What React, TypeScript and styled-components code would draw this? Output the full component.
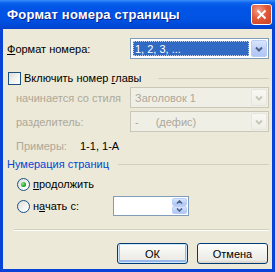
import React from 'react';
import styled, { createGlobalStyle } from 'styled-components';

const GlobalStyle = createGlobalStyle`
  html, body {
    margin: 0;
    padding: 0;
    background: #ece9d8;
  }
  body {
    font-family: "Liberation Sans", Arial, sans-serif;
    font-size: 11px;
    color: #000;
  }
`;

const Window = styled.div`
  width: 275px;
  height: 272px;
  box-sizing: border-box;
  background: #0842d6;
  display: flex;
  flex-direction: column;
`;

const TitleBar = styled.div`
  height: 29px;
  flex: none;
  display: flex;
  align-items: center;
  justify-content: space-between;
  padding: 0 3px 0 7px;
  background: linear-gradient(
    to bottom,
    #3b8cf8 0px,
    #0a62ec 3px,
    #0054e6 8px,
    #0052e2 20px,
    #0046d4 27px,
    #0a3ec4 29px
  );
`;

const Title = styled.span`
  color: #fff;
  font-weight: bold;
  font-size: 13px;
  text-shadow: 1px 1px 0 #0a1e8c;
  letter-spacing: 0.2px;
`;

const CloseButton = styled.div`
  width: 21px;
  height: 21px;
  box-sizing: border-box;
  border: 1px solid #fff;
  border-radius: 3px;
  background: radial-gradient(circle at 35% 30%, #f0a08a 0%, #e2593a 45%, #c8401e 100%);
  display: flex;
  align-items: center;
  justify-content: center;
`;

const Body = styled.div`
  flex: 1;
  margin: 0 3px 3px 3px;
  background: #ece9d8;
  padding: 9px 3px 0 4px;
  display: flex;
  flex-direction: column;
`;

const FieldRow = styled.div<{ $top?: number; $h?: number; $indent?: number }>`
  display: flex;
  align-items: center;
  height: ${p => p.$h ?? 21}px;
  margin-top: ${p => p.$top ?? 0}px;
  padding-left: ${p => p.$indent ?? 0}px;
  flex: none;
`;

const Label = styled.span<{ $disabled?: boolean; $width?: number }>`
  color: ${p => (p.$disabled ? '#aca899' : '#000')};
  width: ${p => (p.$width ? `${p.$width}px` : 'auto')};
  flex: none;
  white-space: pre;
`;

const U = styled.span`
  text-decoration: underline;
  text-underline-offset: 1px;
`;

const GroupLabel = styled.span`
  color: #0046d5;
  flex: none;
`;

const Rule = styled.div<{ $gap?: number }>`
  flex: 1;
  height: 1px;
  background: #d0d0bf;
  margin-left: ${p => p.$gap ?? 8}px;
  align-self: center;
`;

const Combo = styled.div<{ $disabled?: boolean }>`
  margin-left: auto;
  width: 139px;
  height: 21px;
  box-sizing: border-box;
  border: 1px solid ${p => (p.$disabled ? '#c9c7ba' : '#7f9db9')};
  background: ${p => (p.$disabled ? '#f0efe6' : '#fff')};
  display: flex;
  align-items: stretch;
  padding: 1px;
`;

const ComboText = styled.div<{ $selected?: boolean; $disabled?: boolean }>`
  flex: 1;
  display: flex;
  align-items: center;
  gap: 17px;
  padding-left: 2px;
  color: ${p => (p.$disabled ? '#aca899' : p.$selected ? '#fff' : '#000')};
  background: ${p => (p.$selected ? '#316ac5' : 'transparent')};
  outline: ${p => (p.$selected ? '1px dotted #c0d0f0' : 'none')};
  outline-offset: -1px;
  margin: 1px 2px 1px 1px;
`;

const ArrowButton = styled.div<{ $disabled?: boolean }>`
  width: 16px;
  flex: none;
  box-sizing: border-box;
  border-radius: 2px;
  border: 1px solid ${p => (p.$disabled ? '#e8e6dc' : '#b9cdf6')};
  background: ${p =>
    p.$disabled
      ? 'linear-gradient(to bottom, #f8f7f2, #efeee6)'
      : 'linear-gradient(to bottom, #d9e5fd, #bccff8 60%, #b0c6f6)'};
  display: flex;
  align-items: center;
  justify-content: center;
`;

const Box = styled.div<{ $round?: boolean }>`
  width: 13px;
  height: 13px;
  box-sizing: border-box;
  flex: none;
  border: 1px solid #1c5180;
  border-radius: ${p => (p.$round ? '50%' : '0')};
  background: linear-gradient(135deg, #dcdcd7 0%, #f5f5f2 60%, #fff 100%);
  display: flex;
  align-items: center;
  justify-content: center;
  margin-right: 3px;
`;

const Dot = styled.div`
  width: 5px;
  height: 5px;
  border-radius: 50%;
  background: radial-gradient(circle at 35% 35%, #8ee88e 0%, #21a121 60%, #1a8a1a 100%);
`;

const Spinner = styled.div`
  margin-left: auto;
  margin-right: 80px;
  width: 76px;
  height: 20px;
  box-sizing: border-box;
  border: 1px solid #7f9db9;
  background: #fff;
  display: flex;
  justify-content: flex-end;
  padding: 1px;
`;

const SpinButtons = styled.div`
  width: 15px;
  display: flex;
  flex-direction: column;
`;

const SpinButton = styled.div`
  flex: 1;
  box-sizing: border-box;
  border: 1px solid #b9cdf6;
  border-radius: 2px;
  background: linear-gradient(to bottom, #d9e5fd, #bccff8 60%, #b0c6f6);
  display: flex;
  align-items: center;
  justify-content: center;
`;

const Separator = styled.div`
  margin-top: 13px;
  margin-left: 7px;
  height: 1px;
  background: #d0d0bf;
  border-bottom: 1px solid #fff;
  flex: none;
`;

const ButtonRow = styled.div`
  margin-top: 12px;
  display: flex;
  justify-content: flex-end;
  gap: 9px;
  padding-right: 1px;
`;

const Button = styled.div<{ $default?: boolean }>`
  width: 71px;
  height: 21px;
  box-sizing: border-box;
  border: 1px solid #003c74;
  border-radius: 3px;
  background: linear-gradient(to bottom, #ffffff 0%, #f4f4f0 40%, #ecebe6 85%, #d6d0c5 100%);
  box-shadow: ${p => (p.$default ? 'inset 0 0 0 1px #cee7ff, inset 0 -1px 0 2px #98b8ea' : 'none')};
  display: flex;
  align-items: center;
  justify-content: center;
`;

const Chevron = ({ color }: { color: string }) => (
  <svg width="8" height="6" viewBox="0 0 8 6">
    <path d="M1 1.5 L4 4.5 L7 1.5" fill="none" stroke={color} strokeWidth="2" />
  </svg>
);

const SpinChevron = ({ up }: { up?: boolean }) => (
  <svg width="7" height="4" viewBox="0 0 7 4">
    <path d={up ? 'M1 3.5 L3.5 1 L6 3.5' : 'M1 0.5 L3.5 3 L6 0.5'} fill="none" stroke="#4d6185" strokeWidth="1.6" />
  </svg>
);

export default function App() {
  return (
    <>
      <GlobalStyle />
      <Window>
        <TitleBar>
          <Title>Формат номера страницы</Title>
          <CloseButton>
            <svg width="11" height="11" viewBox="0 0 11 11">
              <path d="M1.5 1.5 L9.5 9.5 M9.5 1.5 L1.5 9.5" stroke="#fff" strokeWidth="2" />
            </svg>
          </CloseButton>
        </TitleBar>
        <Body>
          <FieldRow>
            <Label>
              <U>Ф</U>ормат номера:
            </Label>
            <Combo>
              <ComboText $selected>1, 2, 3, ...</ComboText>
              <ArrowButton>
                <Chevron color="#4d6185" />
              </ArrowButton>
            </Combo>
          </FieldRow>

          <FieldRow $top={11} $h={16} $indent={1}>
            <Box />
            <Label>
              Включить номер <U>г</U>лавы
            </Label>
            <Rule $gap={16} />
          </FieldRow>

          <FieldRow $top={1} $indent={9}>
            <Label $disabled>начинается со стиля</Label>
            <Combo $disabled>
              <ComboText $disabled>Заголовок 1</ComboText>
              <ArrowButton $disabled>
                <Chevron color="#c9c7ba" />
              </ArrowButton>
            </Combo>
          </FieldRow>

          <FieldRow $top={3} $indent={9}>
            <Label $disabled>разделитель:</Label>
            <Combo $disabled>
              <ComboText $disabled>
                <span>-</span>
                <span>(дефис)</span>
              </ComboText>
              <ArrowButton $disabled>
                <Chevron color="#c9c7ba" />
              </ArrowButton>
            </Combo>
          </FieldRow>

          <FieldRow $top={6} $h={16} $indent={9}>
            <Label $disabled $width={64}>Примеры:</Label>
            <Label>1-1, 1-А</Label>
          </FieldRow>

          <FieldRow $top={2} $h={16}>
            <GroupLabel>Нумерация страниц</GroupLabel>
            <Rule $gap={9} />
          </FieldRow>

          <FieldRow $top={4} $h={16} $indent={10}>
            <Box $round>
              <Dot />
            </Box>
            <Label>
              <U>п</U>родолжить
            </Label>
          </FieldRow>

          <FieldRow $top={4} $h={20} $indent={10}>
            <Box $round />
            <Label>
              н<U>а</U>чать с:
            </Label>
            <Spinner>
              <SpinButtons>
                <SpinButton>
                  <SpinChevron up />
                </SpinButton>
                <SpinButton>
                  <SpinChevron />
                </SpinButton>
              </SpinButtons>
            </Spinner>
          </FieldRow>

          <Separator />

          <ButtonRow>
            <Button $default>ОК</Button>
            <Button>Отмена</Button>
          </ButtonRow>
        </Body>
      </Window>
    </>
  );
}
